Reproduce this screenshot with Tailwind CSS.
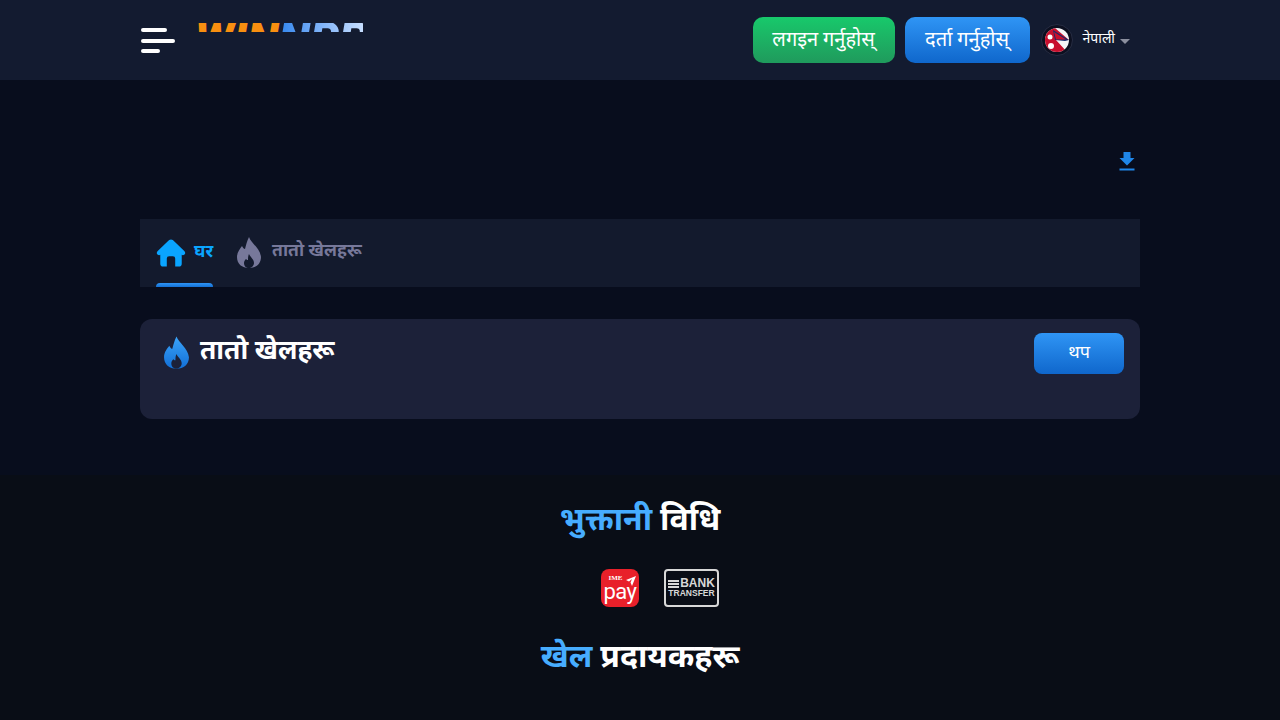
<!DOCTYPE html>
<html lang="ne">
<head>
  <meta charset="UTF-8" />
  <meta name="viewport" content="width=device-width, initial-scale=1.0" />
  <title>Winnpr</title>
  <script src="https://cdn.jsdelivr.net/npm/@tailwindcss/browser@4"></script>
</head>
<body class="bg-[#080d1d] font-['Roboto','Noto_Sans',sans-serif] h-[720px] overflow-hidden">

  <!-- Header -->
  <header class="h-20 bg-[#131b30]">
    <div class="w-[1000px] h-full mx-auto flex items-center justify-between">
      <div class="flex items-start h-full">
        <!-- Menu -->
        <div class="mt-[28px] ml-px w-[35px] flex flex-col gap-[6.5px]">
          <div class="h-[4px] w-[26px] rounded-full bg-white"></div>
          <div class="h-[4px] w-[34px] rounded-full bg-white"></div>
          <div class="h-[4px] w-[19px] rounded-full bg-white"></div>
        </div>
        <!-- Logo, the image is cut off at the top of its box -->
        <div class="ml-[19px] mt-[23px] h-[9px] w-[168px] overflow-hidden">
          <div class="flex mt-[-9px] text-[46px] leading-[50px] font-black italic whitespace-nowrap">
            <span class="text-[#f88f10]">WIN</span>
            <span class="bg-gradient-to-r from-[#2f86ee] to-[#cfe3ff] bg-clip-text text-transparent">NPR</span>
          </div>
        </div>
      </div>
      <div class="flex items-center">
        <button class="h-[46px] w-[142px] rounded-[10px] bg-gradient-to-b from-[#17c96b] to-[#1f9a5c] text-white text-[20px] leading-[40px] pb-[3px]">लगइन गर्नुहोस्</button>
        <button class="ml-[10px] h-[46px] w-[125px] rounded-[10px] bg-gradient-to-b from-[#2f95f5] to-[#0f67cc] text-white text-[20px] leading-[40px] pb-[3px]">दर्ता गर्नुहोस्</button>
        <!-- Nepal flag -->
        <div class="ml-[11px] w-8 h-8 rounded-full bg-[#0c1020] border border-[#262c42] flex items-center justify-center">
          <svg width="24" height="24" viewBox="0 0 24 24">
            <defs><clipPath id="round"><circle cx="12" cy="12" r="12" /></clipPath></defs>
            <g clip-path="url(#round)">
              <rect width="24" height="24" fill="#f4f4f6" />
              <path d="M0 0 L10 0 L24 12 L11 12 L22 24 L0 24 Z" fill="#c8102e" />
              <path d="M8 2 L24 12 L20 13 L10 12 Z" fill="#1a2a6c" />
              <path d="M9 4 L21 11.5 L11 11.5 Z" fill="#c8102e" />
              <circle cx="5" cy="9" r="2.5" fill="#fff" />
              <circle cx="6" cy="18" r="3" fill="#fff" />
            </g>
          </svg>
        </div>
        <span class="ml-[10px] mb-[3px] text-white text-[14px]">नेपाली</span>
        <span class="ml-[5px] mt-[3px] w-0 h-0 border-x-[5px] border-x-transparent border-t-[5px] border-t-[#8b8f9e]"></span>
        <span class="w-[10px]"></span>
      </div>
    </div>
  </header>

  <main class="w-[1000px] mx-auto">
    <!-- Download strip -->
    <div class="h-[139px] flex justify-end items-start pt-[70px] pr-[3px]">
      <svg width="20" height="22" viewBox="0 0 20 22" fill="#1f86e8">
        <path d="M6.5 2 H13.5 V8 H17.5 L10 15.5 L2.5 8 H6.5 Z" />
        <rect x="2.5" y="18.5" width="15" height="2" />
      </svg>
    </div>

    <!-- Tabs -->
    <nav class="h-[68px] bg-[#131a2d] flex pl-4 gap-[23px]">
      <div class="relative w-[57px] flex items-start pt-[20px] gap-[8px]">
        <svg width="30" height="28" viewBox="0 0 31 30" fill="#0aa5ff" class="shrink-0">
          <path d="M13.5 1.2 Q15.5 -0.3 17.5 1.2 L30 13 Q31.5 15 30 16.5 Q28.5 17.8 27 17 V26.5 Q27 29.5 24 29.5 H20 V21 Q20 18.5 17.5 18.5 H13.5 Q11 18.5 11 21 V29.5 H7 Q4 29.5 4 26.5 V17 Q2.5 17.8 1 16.5 Q-0.5 15 1 13 Z" />
        </svg>
        <span class="text-[#0aa5ff] text-[17.6px] font-bold leading-[26px] -mt-px whitespace-nowrap">घर</span>
        <div class="absolute left-0 bottom-0 w-[57px] h-1 rounded-t-sm bg-gradient-to-b from-[#2f95f5] to-[#1470d4]"></div>
      </div>
      <div class="flex items-start pt-[18px] gap-[10px]">
        <svg width="26" height="31" viewBox="0 0 26 31" class="shrink-0">
          <path d="M13 0 C15 6 24 11 25 20 C25 27 20 31 13 31 C6 31 1 27 1 20 C1 15 4 12 6 9 C7 11 8 12 9 12 C10 8 11 4 13 0 Z" fill="#77789a" />
          <path d="M13 17 C14 20 18 22 18 26 C18 29 15 31 13 31 C10 31 8 29 8 26 C8 24 9 23 10 22 C11 23 11 23 12 23 C12 21 12 19 13 17 Z" fill="#131a2d" />
        </svg>
        <span class="text-[#77789a] text-[17.6px] font-bold leading-[26px] whitespace-nowrap">तातो खेलहरू</span>
      </div>
    </nav>

    <!-- Hot games card -->
    <section class="mt-8 h-[100px] rounded-xl bg-[#1c2139] flex justify-between items-start pl-[23px] pr-4 pt-[14px]">
      <div class="flex items-start gap-[10px]">
        <svg width="27" height="33" viewBox="0 0 26 31" class="mt-[3px] shrink-0">
          <defs><linearGradient id="flame" x1="0" y1="0" x2="0" y2="1"><stop offset="0" stop-color="#3ba4fa" /><stop offset="1" stop-color="#126fd6" /></linearGradient></defs>
          <path d="M13 0 C15 6 24 11 25 20 C25 27 20 31 13 31 C6 31 1 27 1 20 C1 15 4 12 6 9 C7 11 8 12 9 12 C10 8 11 4 13 0 Z" fill="url(#flame)" />
          <path d="M13 17 C14 20 18 22 18 26 C18 29 15 31 13 31 C10 31 8 29 8 26 C8 24 9 23 10 22 C11 23 11 23 12 23 C12 21 12 19 13 17 Z" fill="#1c2139" />
        </svg>
        <h2 class="text-white text-[26.4px] font-bold leading-[34px]">तातो खेलहरू</h2>
      </div>
      <button class="w-[90px] h-[41px] rounded-lg bg-gradient-to-b from-[#2f95f5] to-[#0f67cc] text-white text-[18px] leading-[36px] pb-[3px]">थप</button>
    </section>
  </main>

  <!-- Footer -->
  <footer class="mt-[56px] h-[245px] bg-[#090d16] flex flex-col items-center pt-[22px]">
    <h2 class="text-[32px] font-bold leading-[44px] text-white"><span class="text-[#47adff]">भुक्तानी</span> विधि</h2>
    <div class="mt-[28px] ml-10 flex items-center gap-[25px]">
      <div class="relative w-[38px] h-[38px] rounded-lg bg-[#e8202a] flex flex-col items-center justify-center">
        <span class="text-white text-[7px] font-bold leading-[8px] -ml-[9px] font-['Liberation_Serif',serif]">IME</span>
        <span class="text-white text-[22px] leading-[20px] tracking-[-0.5px]">pay</span>
        <svg width="10" height="10" viewBox="0 0 10 10" fill="#fff" class="absolute right-[3px] top-[7px]">
          <path d="M10 0 L0 4 L3 5.5 L6 3 L4.5 6.5 L6 10 Z" />
        </svg>
      </div>
      <div class="w-[55px] h-[38px] rounded-[4px] border-2 border-[#d8d8d8] flex flex-col items-center justify-center bg-[#090d16]">
        <div class="flex items-center gap-px">
          <div class="w-[11px] flex flex-col gap-px">
            <div class="h-[2px] bg-[#d8d8d8]"></div>
            <div class="h-[2px] bg-[#d8d8d8]"></div>
            <div class="h-[2px] bg-[#d8d8d8]"></div>
          </div>
          <span class="text-[#d8d8d8] text-[12px] font-bold leading-[11px] font-['Liberation_Sans',sans-serif]">BANK</span>
        </div>
        <span class="text-[#d8d8d8] text-[8.5px] font-bold leading-[9px] font-['Liberation_Sans',sans-serif]">TRANSFER</span>
      </div>
    </div>
    <h2 class="mt-[27px] text-[32px] font-bold leading-[44px] text-white"><span class="text-[#47adff]">खेल</span> प्रदायकहरू</h2>
  </footer>

</body>
</html>
